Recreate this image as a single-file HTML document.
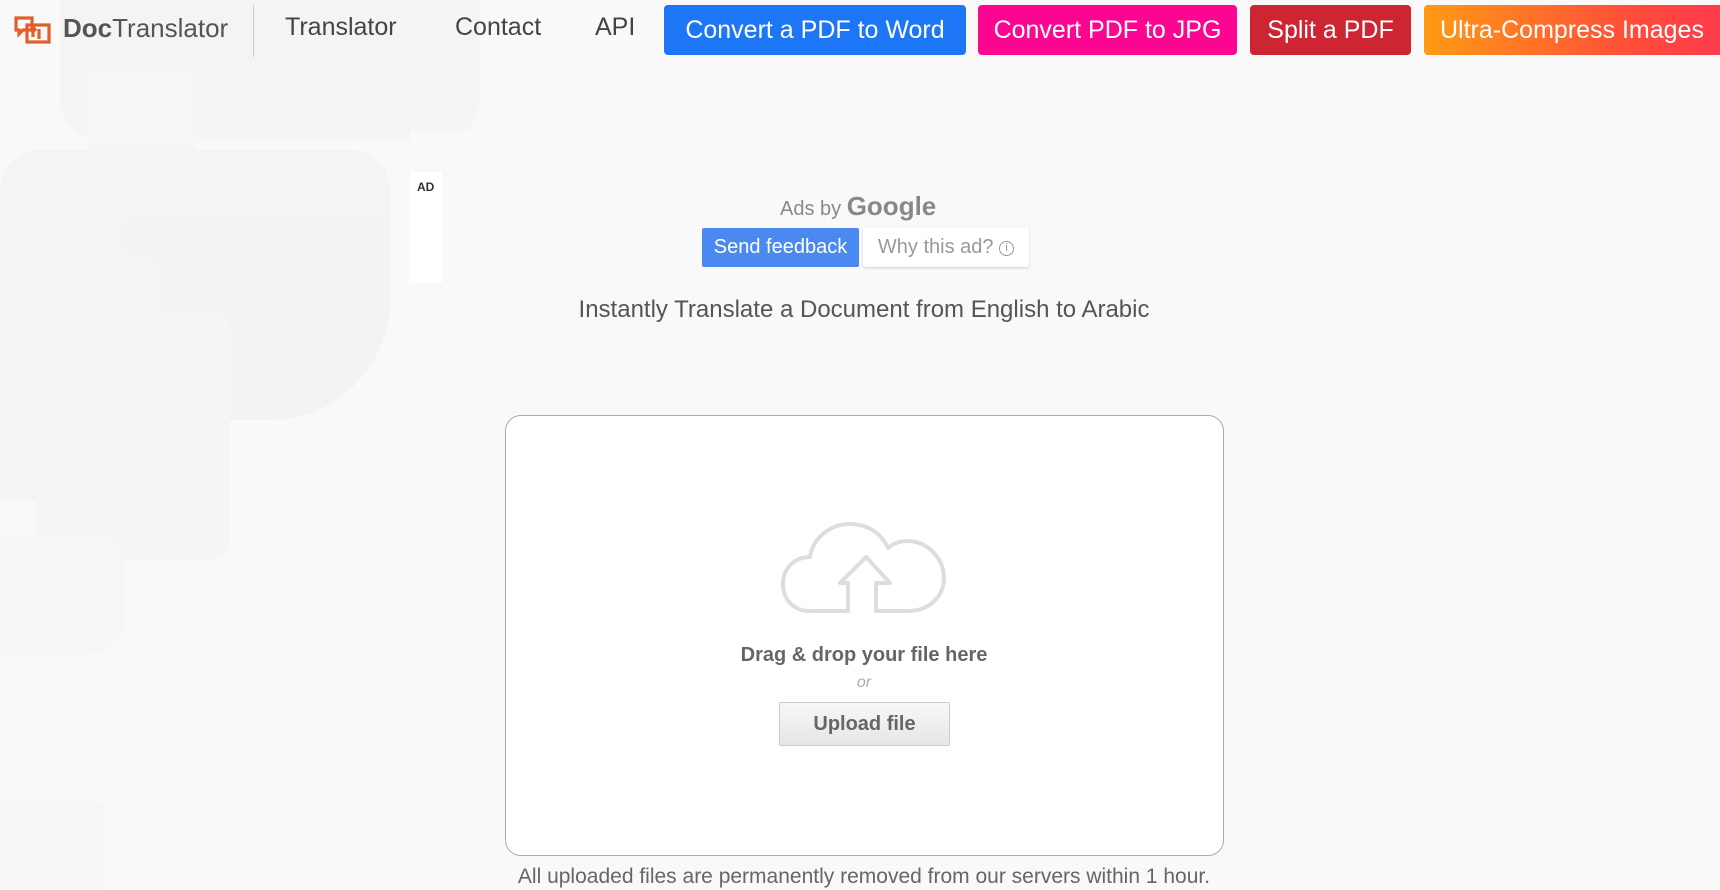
<!DOCTYPE html>
<html><head><meta charset="utf-8"><style>
*{margin:0;padding:0;box-sizing:border-box}
body{width:1720px;height:890px;overflow:hidden;background:#f9f9f9;font-family:"Liberation Sans",sans-serif;position:relative}
.bg{position:absolute;background:#f4f4f4;border-radius:40px}
.a{position:absolute;white-space:nowrap}
.nav{font-size:25px;color:#444;top:13px}
.btn{position:absolute;top:5px;height:50px;border-radius:4px;color:#fff;font-size:25px;line-height:50px;text-align:center;white-space:nowrap;overflow:hidden}
</style></head><body>
<div class="bg" style="left:60px;top:-40px;width:420px;height:180px;background:#f4f4f4"></div>
<div class="bg" style="left:88px;top:70px;width:110px;height:105px;background:#f6f6f6;border-radius:0"></div>
<div class="bg" style="left:0;top:150px;width:390px;height:140px;background:#f4f4f4"></div>
<div class="bg" style="left:125px;top:220px;width:265px;height:200px;background:#f3f3f3;border-radius:0 0 120px 40px"></div>
<div class="bg" style="left:0;top:250px;width:160px;height:250px;background:#f4f4f4;border-radius:0 20px 40px 0"></div>
<div class="bg" style="left:35px;top:310px;width:195px;height:250px;background:#f5f5f5;border-radius:20px"></div>
<div class="bg" style="left:0;top:535px;width:125px;height:120px;background:#f6f6f6;border-radius:0 20px 40px 0"></div>
<div class="bg" style="left:0;top:800px;width:105px;height:90px;background:#f6f6f6;border-radius:0 12px 0 0"></div>
<div style="position:absolute;left:410px;top:131px;width:75px;height:102px;background:#f9f9f9"></div>

<svg class="a" style="left:14px;top:15px" width="38" height="30" viewBox="0 0 38 30" fill="none" stroke="#e0602c" stroke-width="3.2">
<path d="M2 3h16v12H9l-4 4v-4H2z"/><path d="M13 10h22v17H13z"/><path d="M19 22v-9M16 16l3-4 3 4M25 14v10"/>
</svg>
<div class="a" style="left:63px;top:13px;font-size:26px;color:#555"><b>Doc</b>Translator</div>
<div class="a" style="left:253px;top:5px;width:1px;height:52px;background:#ccc"></div>
<div class="a nav" style="left:285px">Translator</div>
<div class="a nav" style="left:455px">Contact</div>
<div class="a nav" style="left:595px">API</div>
<div class="btn" style="left:664px;width:302px;background:#1d76f5">Convert a PDF to Word</div>
<div class="btn" style="left:978px;width:259px;background:#fc0591">Convert PDF to JPG</div>
<div class="btn" style="left:1250px;width:161px;background:#cd2532">Split a PDF</div>
<div class="btn" style="left:1424px;width:310px;background:linear-gradient(90deg,#ff9a14,#ff4a3c 70%,#ff3850);text-align:left;padding-left:16px">Ultra-Compress Images</div>

<div class="a" style="left:410px;top:172px;width:32px;height:111px;background:#fff"></div>
<div class="a" style="left:417px;top:180px;font-size:12px;font-weight:bold;color:#333">AD</div>
<div class="a" style="left:780px;top:191px;font-size:20px;color:#888">Ads by <span style="font-size:26px;font-weight:bold;color:#888">Google</span></div>
<div class="a" style="left:702px;top:228px;width:157px;height:39px;background:#4a8af0;color:#fff;font-size:20px;line-height:39px;text-align:center;border-radius:2px">Send feedback</div>
<div class="a" style="left:863px;top:228px;width:166px;height:39px;background:#fff;color:#999;font-size:20px;line-height:39px;text-align:center;border-radius:2px;box-shadow:0 1px 2px #ccc">Why this ad? <span style="display:inline-block;width:15px;height:15px;border:1.5px solid #999;border-radius:50%;font-size:11px;line-height:12px;vertical-align:2px">i</span></div>
<div class="a" style="left:0;width:1728px;text-align:center;top:296px;font-size:24px;color:#555">Instantly Translate a Document from English to Arabic</div>

<div class="a" style="left:505px;top:415px;width:719px;height:441px;border:1.5px solid #aaa;border-radius:16px;background:#fff"></div>
<svg class="a" style="left:780px;top:521px" width="168" height="93" viewBox="0 0 168 93" fill="none" stroke="#ddd" stroke-width="4" stroke-linejoin="round">
<path d="M68 90H30C14 90 3 79 3 63 3 47 15 36 30 36 33 17 50 3 70 3c18 0 32 10 38 24 6-5 12-7 19-7 20 0 37 17 37 37s-17 33-36 33H96V62h14L86 36 60 62h8z"/>
</svg>
<div class="a" style="left:0;width:1728px;text-align:center;top:644px;font-size:20px;font-weight:bold;color:#666">Drag &amp; drop your file here</div>
<div class="a" style="left:0;width:1728px;text-align:center;top:674px;font-size:16px;font-style:italic;color:#aaa">or</div>
<div class="a" style="left:779px;top:702px;width:171px;height:44px;border:1px solid #ccc;border-radius:2px;background:linear-gradient(#f7f7f7,#e6e6e6);font-size:20px;font-weight:bold;color:#666;text-align:center;line-height:42px">Upload file</div>
<div class="a" style="left:0;width:1728px;text-align:center;top:865px;font-size:21px;color:#666">All uploaded files are permanently removed from our servers within 1 hour.</div>
</body></html>
